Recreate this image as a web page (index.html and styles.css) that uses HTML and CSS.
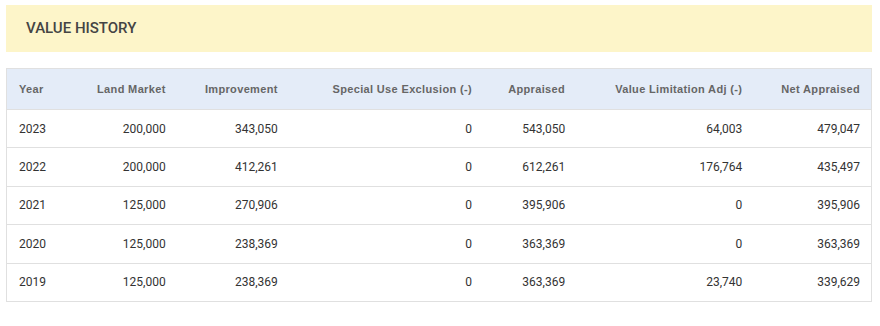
FILE: index.html
```html
<!DOCTYPE html>
<html>
<head>
<meta charset="utf-8">
<link rel="stylesheet" href="styles.css">
</head>
<body>
<div class="page">
  <div class="banner"><h2 class="title">VALUE HISTORY</h2></div>
  <table class="history">
    <colgroup>
      <col class="c-year"><col class="c-land"><col class="c-imp"><col class="c-spec"><col class="c-appr"><col class="c-vl"><col class="c-net">
    </colgroup>
    <thead>
      <tr>
        <th class="left">Year</th>
        <th>Land Market</th>
        <th>Improvement</th>
        <th>Special Use Exclusion (-)</th>
        <th>Appraised</th>
        <th>Value Limitation Adj (-)</th>
        <th>Net Appraised</th>
      </tr>
    </thead>
    <tbody>
      <tr><td class="left">2023</td><td>200,000</td><td>343,050</td><td>0</td><td>543,050</td><td>64,003</td><td>479,047</td></tr>
      <tr><td class="left">2022</td><td>200,000</td><td>412,261</td><td>0</td><td>612,261</td><td>176,764</td><td>435,497</td></tr>
      <tr><td class="left">2021</td><td>125,000</td><td>270,906</td><td>0</td><td>395,906</td><td>0</td><td>395,906</td></tr>
      <tr><td class="left">2020</td><td>125,000</td><td>238,369</td><td>0</td><td>363,369</td><td>0</td><td>363,369</td></tr>
      <tr><td class="left">2019</td><td>125,000</td><td>238,369</td><td>0</td><td>363,369</td><td>23,740</td><td>339,629</td></tr>
    </tbody>
  </table>
</div>
</body>
</html>
```
FILE: styles.css
```css
html, body { margin: 0; padding: 0; background: #fff; }
.page { padding: 5px 8px 0 6px; }
.banner {
  background: #fdf5c9;
  height: 47px;
  display: flex;
  align-items: center;
  padding-left: 20px;
}
.title {
  margin: 0;
  margin-top: -1px;
  font-family: Roboto, "Liberation Sans", sans-serif;
  font-weight: 500;
  font-size: 15px;
  color: #444;
}
.history {
  margin-top: 16px;
  width: 866px;
  table-layout: fixed;
  border-collapse: collapse;
  border: 1px solid #e0e0e0;
}
.c-year { width: 74px; }
.c-land { width: 96px; }
.c-imp { width: 112px; }
.c-spec { width: 194px; }
.c-appr { width: 93px; }
.c-vl { width: 177px; }
.c-net { width: 118px; }
.history th {
  background: #e4ecf8;
  font-family: "Liberation Sans", Arial, sans-serif;
  font-weight: bold;
  font-size: 11px;
  letter-spacing: 0.35px;
  color: #666;
  height: 40px;
  padding: 0 11px 0 12px;
  text-align: right;
  border-bottom: 1px solid #e0e0e0;
  white-space: nowrap;
}
.history td {
  font-family: Roboto, "Liberation Sans", sans-serif;
  font-size: 12px;
  color: #333;
  height: 37.4px;
  padding: 0 11px 0 12px;
  text-align: right;
  border-bottom: 1px solid #e0e0e0;
}
.history .left { text-align: left; }
```
